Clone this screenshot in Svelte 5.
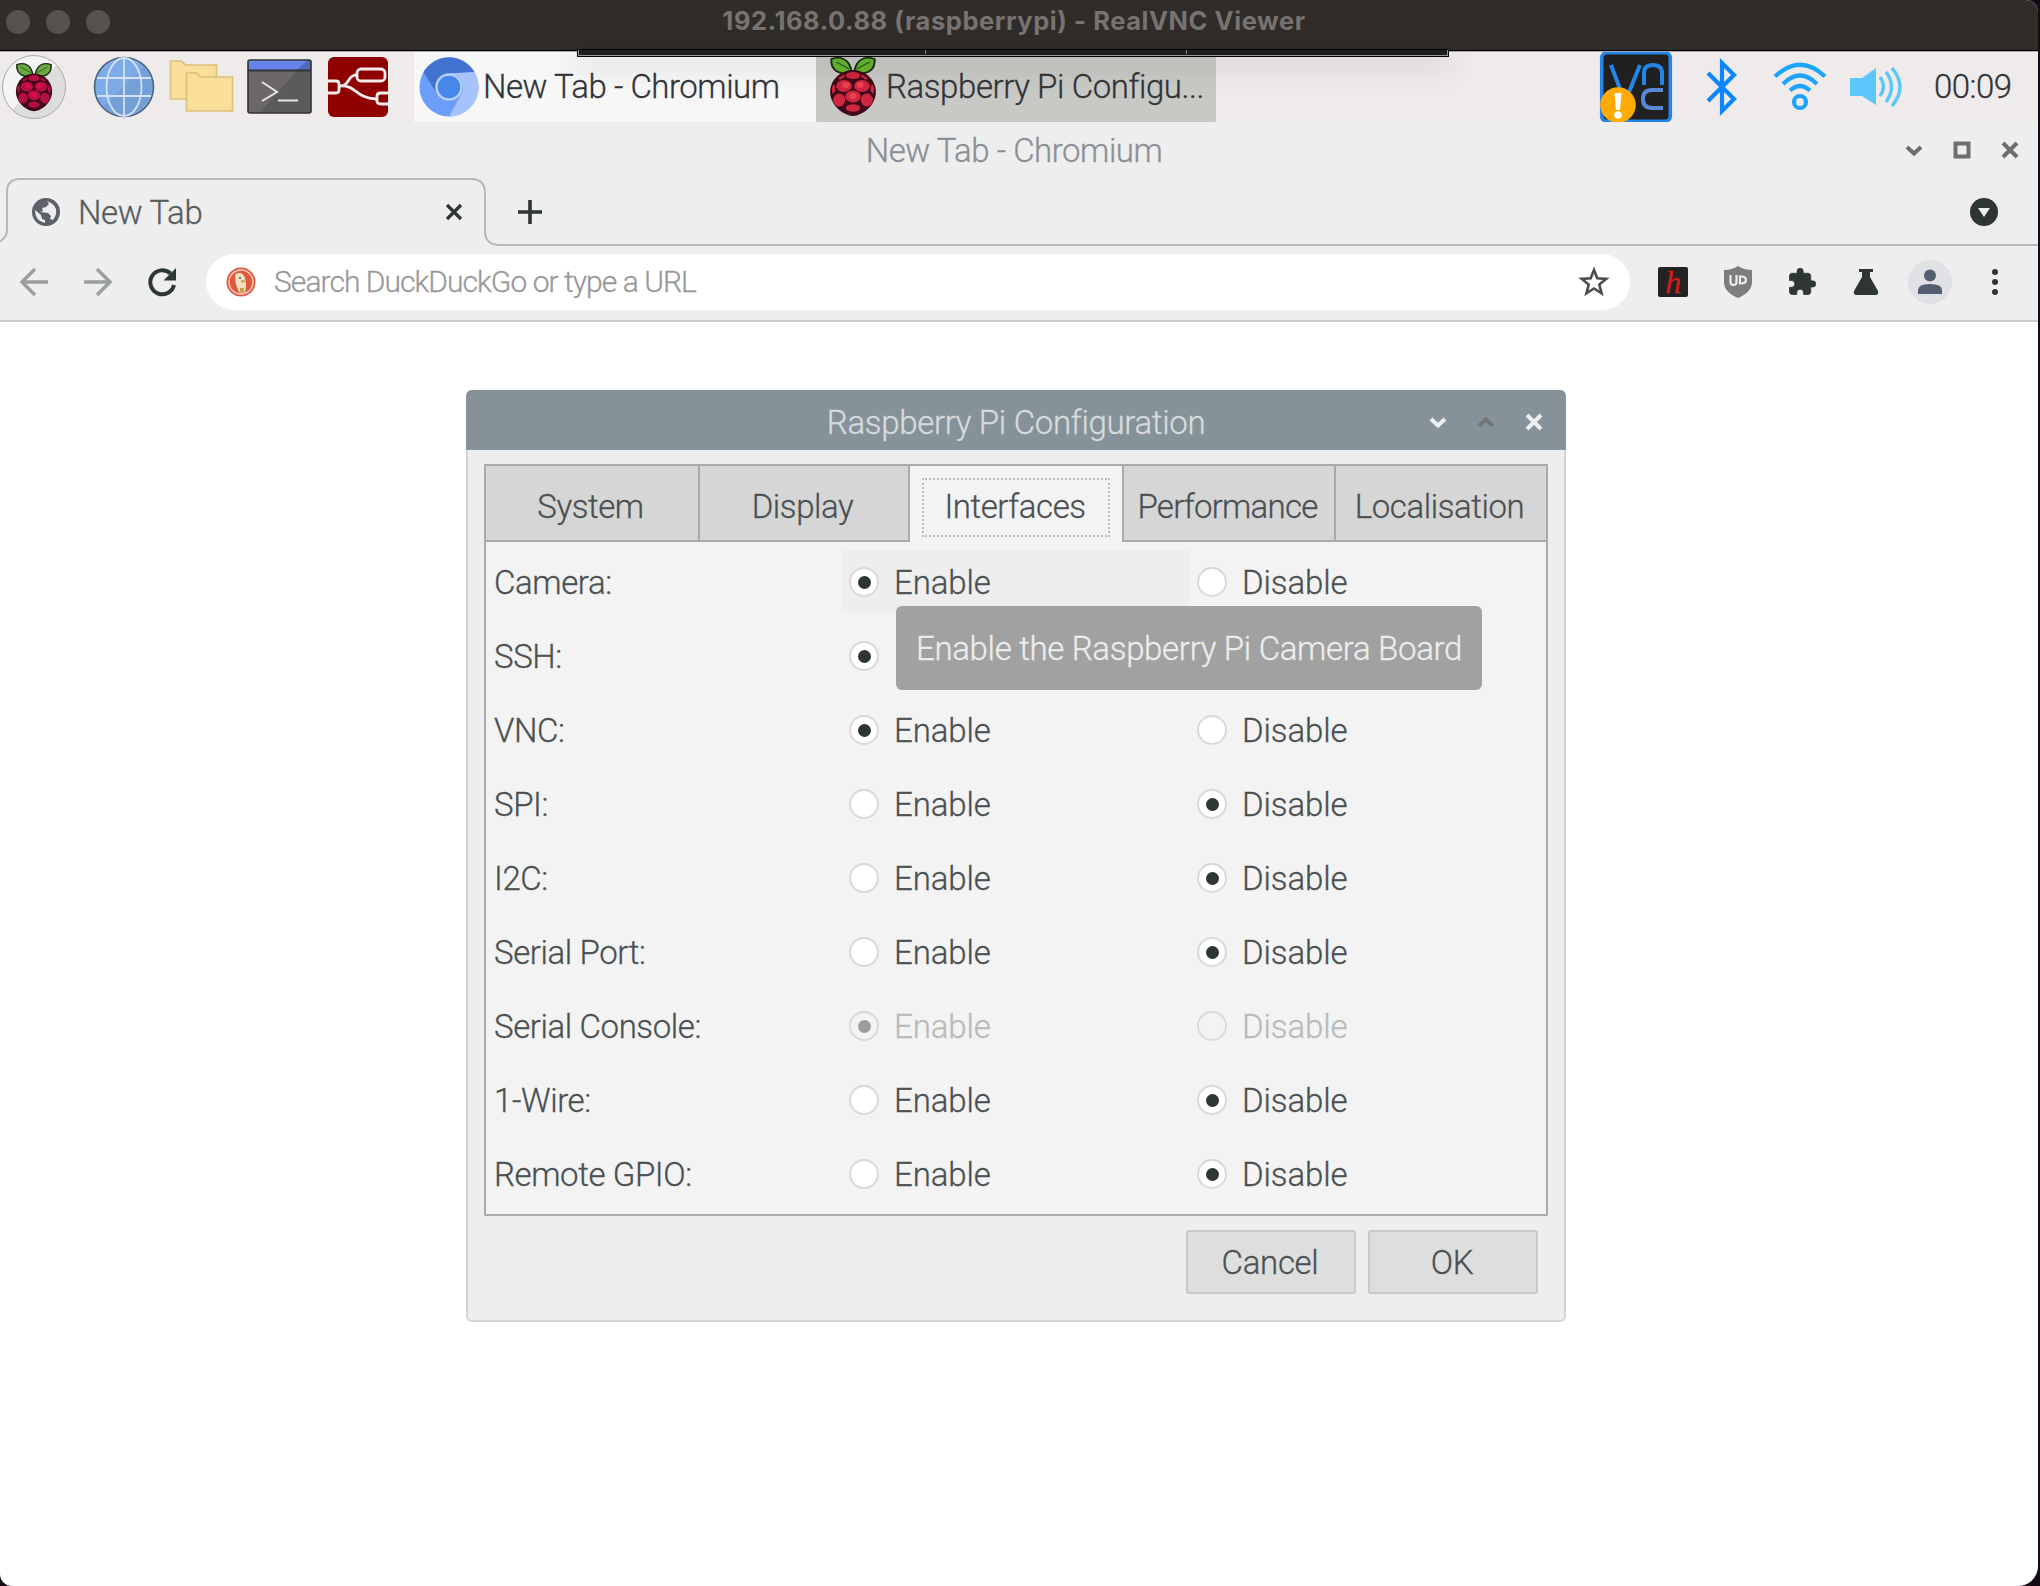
<script>
  const tabs = ['System', 'Display', 'Interfaces', 'Performance', 'Localisation'];
  // `covered` rows sit beneath the tooltip, so only their first ring is drawn
  const rows = [
    { name: 'Camera', on: true, hover: true },
    { name: 'SSH', on: true, covered: true },
    { name: 'VNC', on: true },
    { name: 'SPI', on: false },
    { name: 'I2C', on: false },
    { name: 'Serial Port', on: false },
    { name: 'Serial Console', on: true, off: true },
    { name: '1-Wire', on: false },
    { name: 'Remote GPIO', on: false }
  ];
</script>

{#snippet berry(cls, fill, seed, leaf)}
  <svg class={cls} viewBox="0 0 40 60" preserveAspectRatio="none">
    <path d="M19 15C10 19 1 14 2 2c7-3 15-1 17 13ZM21 15c9 4 18-1 17-13-7-3-15-1-17 13Z" fill={leaf} stroke="#1b2a12" stroke-width="1.6" />
    <path d="M6 5l11 7M34 5l-11 7" stroke="#2c5a1a" stroke-width="1" />
    <path d="M20 13c9 0 18 8 19 20 1 13-9 25-19 26C10 58 0 46 1 33 2 21 11 13 20 13Z" fill="#40091b" />
    <g fill={fill}>
      <ellipse cx="12.500" cy="29" rx="6.500" ry="6" /><ellipse cx="27.500" cy="29" rx="6.500" ry="6" />
      <ellipse cx="20" cy="39.500" rx="6.500" ry="6" /><ellipse cx="20" cy="18.500" rx="6" ry="3.600" />
      <ellipse cx="8.500" cy="43" rx="5" ry="6.500" /><ellipse cx="31.500" cy="43" rx="5" ry="6.500" />
      <ellipse cx="20" cy="51" rx="6" ry="3.800" /><path d="M4 27c-2 3-2 6-1 10 3-2 3-7 1-10ZM36 27c2 3 2 6 1 10-3-2-3-7-1-10ZM8 21l5-4v3l-4 3ZM32 21l-5-4v3l4 3Z" />
    </g>
    <g fill={seed}><circle cx="14" cy="28" r="3" /><circle cx="26" cy="28" r="3" /><circle cx="20" cy="39" r="3" /></g>
  </svg>
{/snippet}

{#snippet radio(label, checked, off)}
  <span class="radio" class:off>
    <span class="ring">{#if checked}<i></i>{/if}</span>
    {#if label}<span>{label}</span>{/if}
  </span>
{/snippet}

<div class="desktop">
  <div class="window">
    <header class="mac">
      <div class="lights"><i></i><i></i><i></i></div>
      <span class="mac-title">192.168.0.88 (raspberrypi) - RealVNC Viewer</span>
      <div class="vnc-handle"><i></i><i></i></div>
    </header>

    <div class="panel">
      <div class="launchers">
        <div class="menu">{@render berry('berry-s', '#b5103f', '#d80f4d', '#6aa843')}</div>
        <svg class="globe" width="62" height="62" viewBox="0 0 62 62">
          <circle cx="31" cy="31" r="29.500" fill="#7dabe8" stroke="#4d6580" stroke-width="1.600" />
          <path d="M51 10a29 29 0 0 1-41 41Z" fill="#73a0d8" />
          <g fill="none" stroke="#d3e2f6" stroke-width="1.800"><path d="M31 2v58M4 22h54M4 40h54" /><ellipse cx="31" cy="31" rx="17.500" ry="29" /></g>
        </svg>
        <svg class="folders" width="66" height="56" viewBox="0 0 66 56">
          <g fill="#f9df9a" stroke="#dbc07c" stroke-width="1.600">
            <path d="M1.500 2h11l4 4h31v34h-46Z" /><path d="M17.500 14h10l4 4h32v34h-46Z" />
          </g>
        </svg>
        <svg class="term" width="66" height="56" viewBox="0 0 66 56">
          <rect x="1" y="1" width="63" height="53" rx="2" fill="#5b5b5b" /><path d="M1 12h49L12 54H1Z" fill="#6c6867" />
          <path d="M2 1h61v10H2Z" fill="#6684ec" /><path d="M61 1h2v10H50Z" fill="#5068bd" />
          <rect x="1" y="1" width="63" height="53" rx="2" fill="none" stroke="#333438" stroke-width="1.600" />
          <path d="M1 11.500h63" stroke="#333438" stroke-width="1.800" />
          <path d="M15 23l15 10-15 9M31 41.500h20" fill="none" stroke="#e6e6e6" stroke-width="2" />
        </svg>
        <svg class="nodered" width="60" height="60" viewBox="0 0 60 60">
          <rect width="60" height="60" rx="6" fill="#8f0000" />
          <g fill="none" stroke="#f5eded" stroke-width="2.800">
            <rect x="29" y="12" width="28" height="12" rx="4" /><path d="M0 24h8q3 0 3 3v6q0 3-3 3H0M60 36h-7q-4 0-4 3v5q0 3 4 3h7" />
            <path d="M12 29c10 0 7-11 17-11M12 29c17-1 15 12 36 13" />
          </g>
        </svg>
      </div>
      <div class="task">
        <svg width="60" height="60" viewBox="0 0 60 60">
          <circle cx="30" cy="30" r="29.500" fill="#6b9dfa" />
          <path d="M4.500 15A29.500 29.500 0 0 1 55.500 15L30 16.500A14 14 0 0 0 18 37Z" fill="#4373d1" />
          <path d="M55.500 15A29.500 29.500 0 0 1 30 59.500L42.500 37A14 14 0 0 0 31 16.500Z" fill="#a6c4fb" />
          <circle cx="30" cy="30" r="12.500" fill="#4887ea" stroke="#b6d0fb" stroke-width="2.400" />
        </svg>
        <span class="tight">New Tab - Chromium</span>
      </div>
      <div class="task active">
        {@render berry('berry-l', '#cf2740', '#ea4150', '#64b52e')}
        <span>Raspberry Pi Configu...</span>
      </div>
      <div class="tray">
        <svg width="72" height="72" viewBox="0 0 72 72">
          <rect x="1.700" y="1.700" width="68.600" height="68.600" rx="5" fill="#202020" stroke="#2484e8" stroke-width="3.600" />
          <g fill="none" stroke="#2484e8" stroke-width="4"><path d="M11 14l14 37L40 14M44 34V22q0-8 9-8t9 8v12" /><path d="M63 39H52q-9 0-9 9t9 9h11" stroke="#5988d5" /></g>
          <circle cx="18" cy="54" r="17.800" fill="#ffaa05" />
          <path d="M14.500 42h7l-1.500 17h-4Z" fill="#fff" /><circle cx="18" cy="64" r="3.800" fill="#fff" />
        </svg>
        <svg class="bt" width="32" height="58" viewBox="0 0 32 58"><path d="M2 15l26 26L16 53V5l12 12L2 43" fill="none" stroke="#0c86ff" stroke-width="4.200" /></svg>
        <svg class="wifi" width="54" height="50" viewBox="0 0 54 50"><g fill="none" stroke="#1ba5fb" stroke-width="4.200"><path d="M2 14.500Q27-9 52 14.500M10 22Q27 5 44 22M17 28.500Q27 19.500 37 28.500" /><circle cx="27" cy="40" r="6" /></g></svg>
        <svg class="vol" width="54" height="42" viewBox="0 0 54 42"><path d="M1 12h12L27 2v37L13 30H1Z" fill="#5cc7fd" /><g fill="none" stroke="#5cc7fd" stroke-width="3.400"><path d="M31 11q7 9.500 0 19M37 6q11 15 0 30M43 2q16 19 0 38" /></g></svg>
        <time>00:09</time>
      </div>
    </div>

    <div class="chrome-title">
      <span class="tight">New Tab - Chromium</span>
      <div class="controls">
        <svg width="18" height="18" viewBox="0 0 18 18"><path d="M2 6l7 6.500L16 6" /></svg>
        <svg width="18" height="18" viewBox="0 0 18 18"><path d="M2.500 2.500h13v13h-13Z" /></svg>
        <svg width="18" height="18" viewBox="0 0 18 18"><path d="M2 2l14 14M16 2L2 16" /></svg>
      </div>
    </div>

    <div class="tabstrip">
      <svg class="tab-line" width="2038" height="70" viewBox="0 0 2038 70"><path d="M-6 66Q7 62 7 52V14Q7 1 20 1H471q14 0 14 14V53q0 14 15 14H2040" fill="none" stroke="#b7b7b7" stroke-width="2" /></svg>
      <svg class="fav" width="28" height="28" viewBox="0 0 28 28"><circle cx="14" cy="14" r="14" fill="#5c616a" /><path d="M15 3.500l2 2.500-3 3-4 1 1 3-3 1 8 1 3 3-1 3 3 1q4-5 3-11-2-5-7-7ZM3 12q0 11 10 13v-3l-3-1-1-4Z" fill="#eee" /></svg>
      <span>New Tab</span>
      <svg class="x" width="18" height="18" viewBox="0 0 18 18"><path d="M2 2l14 14M16 2L2 16" /></svg>
      <svg class="plus" width="26" height="26" viewBox="0 0 26 26"><path d="M13 1v24M1 13h24" /></svg>
      <svg class="drop" width="28" height="28" viewBox="0 0 28 28"><circle cx="14" cy="14" r="14" fill="#2d3535" /><path d="M8 10h12l-6 9Z" fill="#eee" /></svg>
    </div>

    <div class="toolbar">
      <svg class="arrow" width="28" height="28" viewBox="0 0 28 28"><path d="M28 14H2M15 1L2 14l13 13" /></svg>
      <svg class="arrow" width="28" height="28" viewBox="0 0 28 28"><path d="M0 14h26M13 1l13 13-13 13" /></svg>
      <svg width="30" height="28" viewBox="0 0 30 28"><path d="M26 17A12 12 0 1 1 22.500 5.500" fill="none" stroke="#2d3535" stroke-width="4" /><path d="M28 0v12.500H15.500Z" fill="#2d3535" /></svg>
      <div class="omni">
        <svg width="30" height="30" viewBox="0 0 30 30">
          <circle cx="15" cy="15" r="14.500" fill="#e0593d" /><circle cx="15" cy="15" r="12" fill="none" stroke="#f6cfc4" stroke-width="1.400" />
          <path d="M9.500 7q7-3 9.500 4 2 7 0 14-4 1-6 0Q8 15 9.500 7Z" fill="#efe0c4" /><path d="M15 13l6 1-5 2ZM14 21h4v4h-4Z" fill="#c9a040" /><circle cx="14" cy="11" r="1" fill="#555" />
        </svg>
        <span>Search DuckDuckGo or type a URL</span>
        <svg class="star" width="30" height="30" viewBox="0 0 30 30"><path d="M15 3l3.300 8.300 9 .6-7 5.700 2.300 8.700L15 21.500l-7.600 4.800 2.300-8.700-7-5.700 9-.6Z" fill="none" stroke="#4b4e4e" stroke-width="2.600" /></svg>
      </div>
      <div class="ext">
        <div class="hy">h</div>
        <svg width="30" height="32" viewBox="0 0 30 32"><path d="M15 0q6 4 14 4v12q0 10-14 16Q1 26 1 16V4q8 0 14-4Z" fill="#7d7d7d" /><path d="M7.500 9v7q0 3 3 3t3-3V9M17 10.500v7h2q4-.5 4-3.500t-4-3.500Z" fill="none" stroke="#eee" stroke-width="2.200" /></svg>
        <svg width="30" height="30" viewBox="0 0 24 24"><path d="M20.500 11H19V7c0-1.100-.9-2-2-2h-4V3.500a2.500 2.500 0 0 0-5 0V5H4c-1.100 0-2 .9-2 2v3.800h1.500a2.700 2.700 0 0 1 0 5.400H2V20c0 1.100.9 2 2 2h3.800v-1.500a2.700 2.700 0 0 1 5.400 0V22H17c1.100 0 2-.9 2-2v-4h1.500a2.500 2.500 0 0 0 0-5Z" fill="#2d3535" stroke="#2d3535" stroke-width=".6" /></svg>
        <svg class="flask" width="26" height="26" viewBox="0 0 26 26"><path d="M6 0h14v3h-3v5l8 14q1 3-2 4H3q-3-1-2-4L9 8V3H6Z" fill="#2d3535" /></svg>
        <div class="avatar"><svg width="26" height="26" viewBox="0 0 26 26"><circle cx="13" cy="6.500" r="6" fill="#565d70" /><path d="M1 25v-4q0-6 12-6t12 6v4Z" fill="#565d70" /></svg></div>
        <div class="dots"><i></i><i></i><i></i></div>
      </div>
    </div>

    <main>
      <section class="dialog">
        <div class="dlg-title">
          <span>Raspberry Pi Configuration</span>
          <div class="controls light">
            <svg width="18" height="18" viewBox="0 0 18 18"><path d="M2 6l7 6.500L16 6" /></svg>
            <svg class="dim" width="18" height="18" viewBox="0 0 18 18"><path d="M2 13l7-6.500L16 13" /></svg>
            <svg width="18" height="18" viewBox="0 0 18 18"><path d="M2 2l14 14M16 2L2 16" /></svg>
          </div>
        </div>
        <div class="notebook">
          <nav>
            {#each tabs as t}
              <div class="tab" class:sel={t === 'Interfaces'} class:narrow={t === 'Performance'}><span>{t}</span></div>
            {/each}
          </nav>
          <div class="rows">
            {#each rows as r}
              <div class="row">
                <span class="name">{r.name}:</span>
                <div class="cell" class:hover={r.hover}>{@render radio(r.covered ? '' : 'Enable', r.on, r.off)}</div>
                {#if !r.covered}
                  <div class="cell">{@render radio('Disable', !r.on, r.off)}</div>
                {/if}
              </div>
            {/each}
            <div class="tooltip">Enable the Raspberry Pi Camera Board</div>
          </div>
        </div>
        <div class="actions"><button>Cancel</button><button>OK</button></div>
      </section>
    </main>
  </div>
</div>

<style>
  :global(body) { margin: 0; background: #150b14; }
  .desktop { width: 2040px; height: 1586px; overflow: hidden; background: #150b14; font: 300 33px/40px Roboto, 'Liberation Sans', sans-serif; letter-spacing: -.32px; color: #4a5052; -webkit-text-stroke: .3px currentColor; white-space: nowrap; }
  .window { width: 2038px; height: 1586px; background: #fff; border-radius: 0 12px 20px 12px; overflow: hidden; display: flex; flex-direction: column; }
  svg { display: block; flex: none; overflow: visible; }
  i { display: block; }
  .tight { letter-spacing: -.48px; }

  .mac { position: relative; z-index: 2; flex: none; box-sizing: border-box; height: 52px; background: #302c29; border-bottom: 1px solid #aaa; box-shadow: inset 0 -1px #000; display: flex; justify-content: center; -webkit-text-stroke: 0; }
  .lights { position: absolute; left: 6px; top: 10px; display: flex; gap: 16px; }
  .lights i { width: 24px; height: 24px; border-radius: 50%; background: #55514f; }
  .mac-title { font: 700 25.5px/42px Inter, sans-serif; letter-spacing: .56px; color: #767370; margin-right: 10px; }
  .vnc-handle { position: absolute; box-sizing: border-box; left: 577px; top: 49px; width: 872px; height: 8px; background: #1d1e1e; border: 1px solid #000; box-shadow: inset 0 -1px #999, inset 1px 0 #999, inset -1px 0 #999, 0 8px 28px 4px rgba(0, 0, 0, .1); display: flex; padding-left: 347px; gap: 260px; }
  .vnc-handle i { width: 1px; height: 4px; background: #888; }

  .panel { flex: none; height: 70px; background: #efebea; display: flex; color: #323438; }
  .launchers { width: 414px; display: flex; align-items: center; padding-left: 2px; box-sizing: border-box; }
  .menu { box-sizing: border-box; width: 64px; height: 64px; border: 1px solid #aaa; border-radius: 50%; background: linear-gradient(135deg, #f5f5f5 50%, #ddd 50%); display: grid; place-items: center; }
  :global(.berry-s) { width: 38px; height: 49px; }
  :global(.berry-l) { width: 48px; height: 60px; }
  .globe { margin-left: 27px; }
  .folders { margin-left: 14px; }
  .term { margin-left: 12px; }
  .nodered { margin-left: 15px; }
  .task { box-sizing: border-box; width: 402px; background: #f7f7f7; display: flex; align-items: center; padding-left: 5px; gap: 2px; }
  .task svg { margin-right: 2px; }
  .active { width: 400px; padding-left: 13px; gap: 7px; background: #c8c8c5; border-radius: 0 0 2px 2px; letter-spacing: -.42px; }
  .tray { flex: 1; display: flex; align-items: center; padding-left: 384px; }
  .bt { margin-left: 34px; }
  .wifi { margin-left: 35px; }
  .vol { margin-left: 22px; }
  time { margin-left: 31px; letter-spacing: -.5px; }

  .chrome-title { position: relative; flex: none; height: 56px; background: #eee; display: flex; justify-content: center; align-items: center; color: #8b8f95; box-sizing: border-box; padding: 2px 10px 0 0; }
  .controls { position: absolute; right: 19px; top: 19px; display: flex; gap: 30px; }
  .controls path { fill: none; stroke: #6e6e6e; stroke-width: 4; }
  .light path { stroke: #eee; }
  .light .dim path { stroke: #737576; }

  .tabstrip { position: relative; flex: none; box-sizing: border-box; height: 69px; background: #eee; display: flex; align-items: center; padding: 0 0 2px 32px; color: #565d61; }
  .tab-line { position: absolute; left: 0; top: 0; }
  .fav { margin-right: 18px; }
  .tabstrip > span { width: 300px; padding-top: 2px; }
  .x { margin-left: 67px; margin-right: 54px; }
  .x path { fill: none; stroke: #2d3535; stroke-width: 3.2; }
  .plus path { stroke: #2d3535; stroke-width: 3.6; fill: none; }
  .drop { margin-left: auto; margin-right: 40px; }

  .toolbar { flex: none; box-sizing: border-box; height: 75px; background: #eee; border-bottom: 2px solid #ccc; display: flex; align-items: center; padding: 0 0 4px 20px; }
  .arrow { margin-right: 36px; }
  .arrow path { fill: none; stroke: #9a9e9e; stroke-width: 3.4; }
  .omni { box-sizing: border-box; width: 1424px; height: 56px; border-radius: 28px; background: #fff; margin-left: 28px; padding: 0 21px 0 20px; display: flex; align-items: center; gap: 18px; font-size: 30px; letter-spacing: -.95px; color: #98989a; }
  .star { margin-left: auto; }
  .ext { flex: 1; display: flex; align-items: center; padding-left: 28px; }
  .hy { width: 30px; height: 30px; background: #232323; border-radius: 2px; color: #d51c1c; font: italic 400 32px/30px 'Liberation Serif', serif; text-align: center; }
  .ext svg { margin-left: 35px; }
  .ext svg + svg { margin-left: 34px; }
  .ext .flask { margin-left: 36px; }
  .ext .avatar { width: 44px; height: 44px; border-radius: 50%; background: #dfe1e5; display: grid; place-items: center; margin-left: 29px; }
  .ext .avatar svg { margin: 0; }
  .dots { margin-left: 40px; display: grid; gap: 4px; }
  .dots i { width: 6px; height: 6px; border-radius: 50%; background: #2d3535; }

  main { padding: 68px 0 0 466px; }
  .dialog { box-sizing: border-box; width: 1100px; height: 932px; background: #eee; border: 2px solid #d4d4d4; border-top: 0; border-radius: 6px; }
  .dlg-title { position: relative; box-sizing: border-box; margin: 0 -2px; height: 60px; background: #85929a; border-radius: 6px 6px 0 0; display: flex; justify-content: center; align-items: center; color: #d8dbdd; padding-top: 5px; }
  .dlg-title .controls { right: 23px; top: 23px; }
  .notebook { box-sizing: border-box; margin: 14px 16px 0; height: 752px; border: 2px solid #aaa; background: #f3f3f3; }
  nav { display: grid; grid-template-columns: 214px 210px 214px 212px 210px; height: 76px; }
  .tab { box-sizing: border-box; background: #d6d6d6; border-right: 2px solid #aaa; border-bottom: 2px solid #aaa; display: grid; place-items: center; padding: 8px 3px 0 0; letter-spacing: -.42px; }
  .tab:last-child { border-right: 0; }
  .narrow { letter-spacing: -.75px; }
  .tab.sel { background: #f3f3f3; border-bottom: 0; padding: 12px 12px 5px; }
  .sel span { box-sizing: border-box; width: 188px; height: 59px; border: 2px dotted #bbb; display: grid; place-items: center; padding: 0 2px 2px 0; }
  .rows { position: relative; padding-top: 3px; }
  .row { display: flex; align-items: center; height: 74px; padding-left: 8px; }
  .name { width: 348px; padding-top: 2px; letter-spacing: -.4px; }
  .cell { width: 348px; height: 64px; display: flex; align-items: center; }
  .hover { background: linear-gradient(#eee, #eee) no-repeat 0 0 / 347px 62px; }
  .radio { display: flex; align-items: center; gap: 15px; padding-left: 7px; letter-spacing: -.1px; }
  .radio > span + span { padding-top: 2px; }
  .ring { box-sizing: border-box; width: 30px; height: 30px; border: 2px solid #d9d9d9; border-radius: 50%; background: #fff; display: grid; place-items: center; }
  .ring i { width: 13px; height: 13px; border-radius: 50%; background: #2d3535; }
  .off { color: #b8babb; }
  .off .ring { background: #f3f3f3; }
  .off .ring i { background: #9c9c9c; }
  .tooltip { position: absolute; box-sizing: border-box; left: 410px; top: 64px; width: 586px; height: 84px; padding-top: 2px; background: #a1a1a1; border-radius: 6px; color: #ededed; display: grid; place-items: center; }
  .actions { display: flex; justify-content: flex-end; gap: 12px; padding: 14px 26px 0 0; }
  button { box-sizing: border-box; width: 170px; height: 64px; font: inherit; letter-spacing: inherit; color: inherit; background: #dedede; border: 2px solid #c9c9c9; border-radius: 3px; padding: 2px 2px 0 0; }
</style>
